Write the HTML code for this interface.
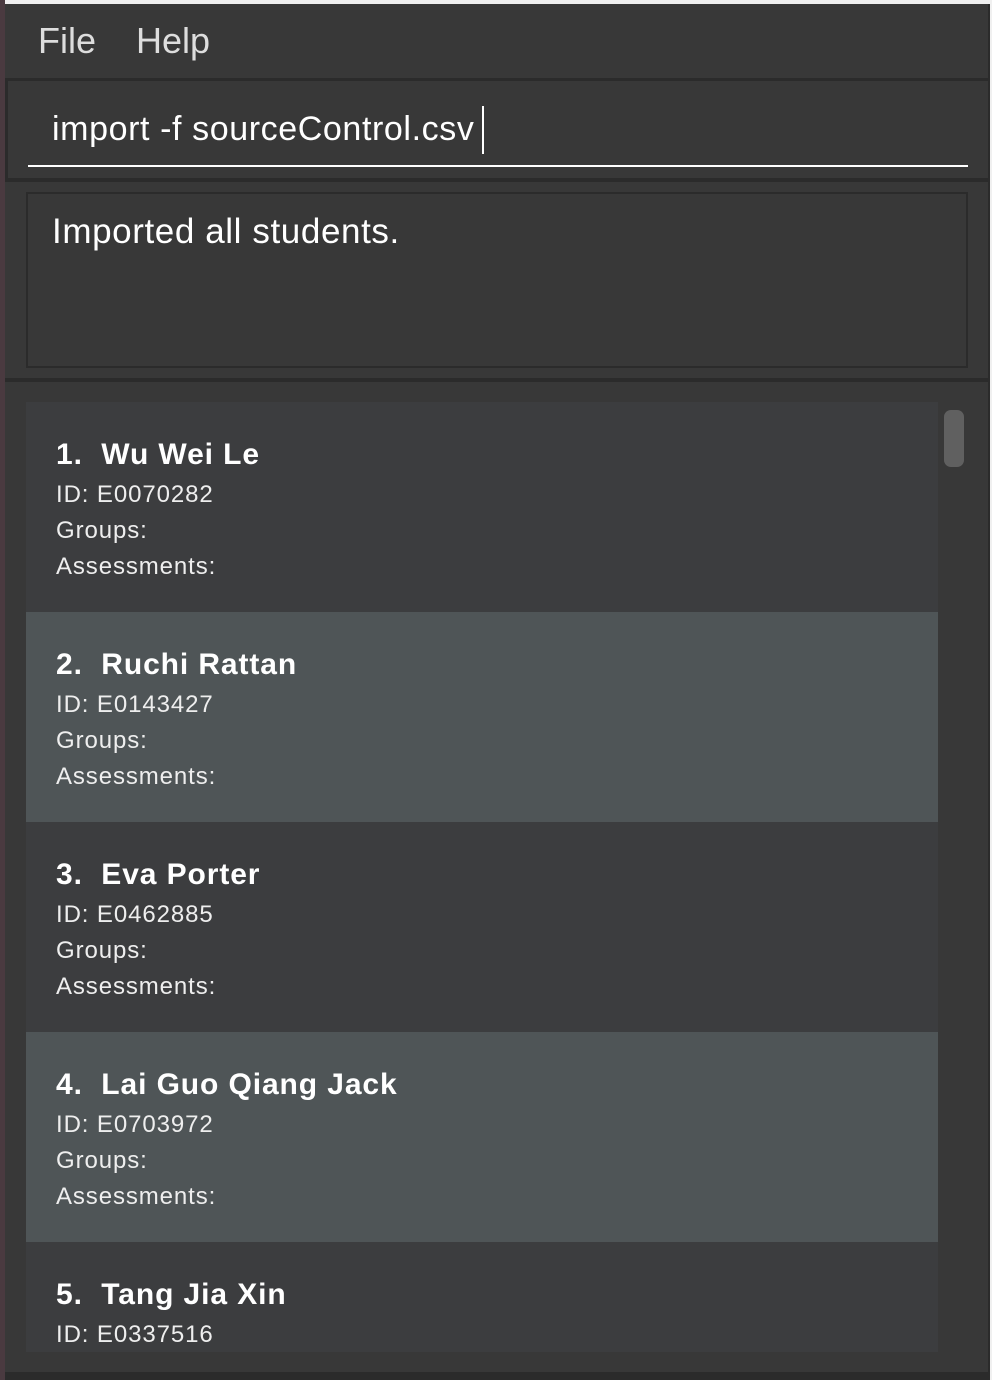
<!DOCTYPE html>
<html><head><style>
body{margin:0;width:992px;height:1380px;background:#f0f0f0;overflow:hidden;font-family:"Liberation Sans",sans-serif;position:relative}
.abs{position:absolute}
.win{left:5px;top:4px;width:985px;height:1376px;background:#383838}
.card{position:absolute;left:26px;width:912px;height:210px;color:#fff}
.card .n{position:absolute;left:30px;top:36px;font-size:30px;font-weight:bold;letter-spacing:0.9px}
.card .d{position:absolute;left:30px;font-size:24px;color:#eee;letter-spacing:0.9px}
</style></head><body>
<div class="abs" style="left:0;top:0;width:5px;height:1380px;background:#4a3a40"></div>
<div class="abs win"></div>
<div class="abs" style="left:38px;top:20px;font-size:36px;color:#ddd">File</div>
<div class="abs" style="left:136px;top:20px;font-size:36px;color:#ddd">Help</div>
<div class="abs" style="left:5px;top:78px;width:985px;height:3px;background:#2b2b2b"></div>
<div class="abs" style="left:5px;top:81px;width:3px;height:97px;background:#2b2b2b"></div>
<div class="abs" style="left:52px;top:110px;font-size:34px;color:#fff;letter-spacing:0.6px">import -f sourceControl.csv</div>
<div class="abs" style="left:482px;top:106px;width:2px;height:48px;background:#fff"></div>
<div class="abs" style="left:28px;top:165px;width:940px;height:2px;background:#fff"></div>
<div class="abs" style="left:5px;top:178px;width:985px;height:4px;background:#2b2b2b"></div>
<div class="abs" style="left:26px;top:192px;width:938px;height:172px;border:2px solid #2b2b2b"></div>
<div class="abs" style="left:52px;top:212px;font-size:35px;color:#fff;letter-spacing:0.6px">Imported all students.</div>
<div class="abs" style="left:5px;top:378px;width:985px;height:4px;background:#2b2b2b"></div>
<div class="abs" style="left:26px;top:402px;width:912px;height:950px;background:#3c3d3f"></div>

<div class="card" style="top:402px;background:#3c3d3f"><div class="n">1.&nbsp; Wu Wei Le</div><div class="d" style="top:79px">ID: E0070282</div><div class="d" style="top:115px">Groups:</div><div class="d" style="top:151px">Assessments:</div></div>
<div class="card" style="top:612px;background:#4f5557"><div class="n">2.&nbsp; Ruchi Rattan</div><div class="d" style="top:79px">ID: E0143427</div><div class="d" style="top:115px">Groups:</div><div class="d" style="top:151px">Assessments:</div></div>
<div class="card" style="top:822px;background:#3c3d3f"><div class="n">3.&nbsp; Eva Porter</div><div class="d" style="top:79px">ID: E0462885</div><div class="d" style="top:115px">Groups:</div><div class="d" style="top:151px">Assessments:</div></div>
<div class="card" style="top:1032px;background:#4f5557"><div class="n">4.&nbsp; Lai Guo Qiang Jack</div><div class="d" style="top:79px">ID: E0703972</div><div class="d" style="top:115px">Groups:</div><div class="d" style="top:151px">Assessments:</div></div>
<div class="card" style="top:1242px;height:110px;background:#3c3d3f;overflow:hidden"><div class="n">5.&nbsp; Tang Jia Xin</div><div class="d" style="top:79px">ID: E0337516</div></div>

<div class="abs" style="left:944px;top:410px;width:20px;height:57px;border-radius:7px;background:#606060"></div>
<div class="abs" style="left:988px;top:4px;width:2px;height:1376px;background:#2b2b2b"></div>
<div class="abs" style="left:5px;top:1372px;width:985px;height:8px;background:#2b2b2b"></div>
</body></html>
